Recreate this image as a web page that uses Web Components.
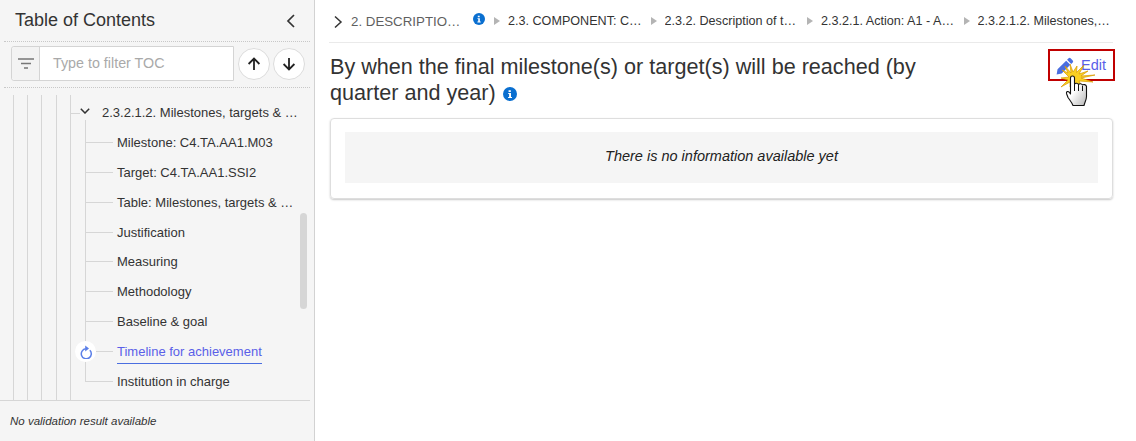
<!DOCTYPE html>
<html lang="en"><head><meta charset="utf-8"><title>TOC</title>
<style>
html,body{margin:0;height:441px;overflow:hidden;background:#fff;font-family:"Liberation Sans",Arial,sans-serif;color:#333}
toc-app{display:flex;width:1136px;height:441px}
</style></head><body>
<toc-app>
  <toc-sidebar>
    <toc-row kind="parent">2.3.2.1.2. Milestones, targets &amp; …</toc-row>
    <toc-row>Milestone: C4.TA.AA1.M03</toc-row>
    <toc-row>Target: C4.TA.AA1.SSI2</toc-row>
    <toc-row>Table: Milestones, targets &amp; …</toc-row>
    <toc-row>Justification</toc-row>
    <toc-row>Measuring</toc-row>
    <toc-row>Methodology</toc-row>
    <toc-row>Baseline &amp; goal</toc-row>
    <toc-row kind="active">Timeline for achievement</toc-row>
    <toc-row kind="last">Institution in charge</toc-row>
  </toc-sidebar>
  <toc-main></toc-main>
</toc-app>
<script>
function def(name, html){
  const t=document.createElement('template');t.innerHTML=html;
  customElements.define(name,class extends HTMLElement{
    constructor(){super();this.attachShadow({mode:'open'}).appendChild(t.content.cloneNode(true));}
  });
}
const INFO=s=>`<svg width="${s}" height="${s}" viewBox="0 0 14 14" aria-hidden="true"><circle cx="7" cy="7" r="7" fill="#0a6fd0"/><path d="M5.6 3.2h2.2v1.7H5.6zM5.2 6h2.8v4h1v1.1H5.1V10h1V7.1h-.9z" fill="#fff"/></svg>`;

def('toc-app',`<style>:host{display:flex}</style><slot></slot>`);

def('toc-iconbtn',`<style>
:host{display:flex;width:32px;height:32px;box-sizing:border-box;border:1px solid #dcdcdc;border-radius:50%;background:#fff;align-items:center;justify-content:center}
</style><slot></slot>`);

def('toc-filter',`<style>
:host{display:flex;align-items:center;gap:4px;margin:4px 4px 0 11px;height:35px}
.box{display:flex;width:223px;height:35px;box-sizing:border-box;border:1px solid #d4d4d4;border-radius:3px 0 0 3px;background:#fff}
.add{width:27px;flex:none;background:#f3f3f3;border-right:1px solid #d4d4d4;display:flex;align-items:center;justify-content:center;border-radius:3px 0 0 3px}
.ph{padding-left:13px;font-size:14.3px;line-height:33px;color:#a9a9a9}
.btns{display:flex;gap:3px}
</style>
<div class="box"><div class="add"><svg width="16" height="11" viewBox="0 0 16 11"><path d="M0 1h16M3 5.5h10M6 10h4" stroke="#777" stroke-width="1.6"/></svg></div><div class="ph">Type to filter TOC</div></div>
<div class="btns">
<toc-iconbtn><svg width="14" height="14" viewBox="0 0 14 14"><path d="M7 13V1.800M1.600 7 7 1.600 12.400 7" fill="none" stroke="#222" stroke-width="1.800"/></svg></toc-iconbtn>
<toc-iconbtn><svg width="14" height="14" viewBox="0 0 14 14"><path d="M7 1v11.200M1.600 7 7 12.400 12.400 7" fill="none" stroke="#222" stroke-width="1.800"/></svg></toc-iconbtn>
</div>`);

def('toc-row',`<style>
:host{display:flex;height:29.875px;align-items:center;position:relative;font-size:13px;white-space:nowrap;color:#333}
.stem{position:absolute;left:0;top:0;bottom:0;width:1px;background:#d6d6d6}
.hook{flex:none;width:28px;height:1px;background:#d6d6d6;margin:-1px 4px 0 0}
.lab{display:block;line-height:20px}
:host([kind=last]) .stem{bottom:50%}
:host([kind=active]) .hook{margin-left:11px;width:17px}
:host([kind=active]) .lab{color:#5a5fe8;border-bottom:1px solid #4a6ee0;margin-top:2px;padding-bottom:1px}
.spin{display:none;position:absolute;left:-10px;top:50%;margin-top:-11px;width:21px;height:21px;border-radius:50%;background:#fff;align-items:center;justify-content:center}
:host([kind=active]) .spin{display:flex}
:host([kind=parent]){margin-left:-15px;height:30px}
:host([kind=parent]) .stem{left:15px;top:22px;bottom:0}
:host([kind=parent]) .hook{display:none}
.chev{display:none;flex:none;margin-top:-4px}
:host([kind=parent]) .chev{display:block}
:host([kind=parent]) .lab{margin-left:12px}
.lead{display:none;flex:none;width:10px;height:1px;background:#d6d6d6}
:host([kind=parent]) .lead{display:block}
</style>
<span class="stem"></span><span class="lead"></span>
<svg class="chev" width="10" height="6" viewBox="0 0 10 6"><path d="M.8.8 5 5 9.200.8" fill="none" stroke="#333" stroke-width="1.500"/></svg>
<span class="spin"><svg width="14" height="15" viewBox="0 0 14 15"><path d="M10.800 5.200A5 5 0 1 1 6.800 3.800" transform="translate(0 1)" fill="none" stroke="#5b7fe8" stroke-width="1.500"/><path d="M6.200 1.500 10 4.600 6.200 7.400z" fill="#5b7fe8"/></svg></span>
<span class="hook"></span><span class="lab"><slot></slot></span>`);

def('toc-sidebar',`<style>
:host{display:flex;flex-direction:column;flex:none;width:315px;height:441px;box-sizing:border-box;background:#f5f5f5;border-right:1px solid #d2d2d2;padding-right:4px}
.head{display:flex;justify-content:space-between;align-items:center;height:41px;padding:0 15px 0 15px;box-sizing:border-box;font-size:18px;color:#333}
.dots{height:0;border-top:1px dotted #c8c8c8;margin-left:4px}
.tree{flex:1;min-height:0;position:relative;overflow:hidden;display:flex;padding-top:9px;box-sizing:border-box}
.guides{display:flex;flex:none;margin:-2px 0 0 13px}
.guides i{display:block;width:1px;background:#d6d6d6;margin-right:13px}
.guides i:nth-child(3){margin-right:14px}
.rows{margin:1px 0 0 1px}
.bar{position:absolute;left:300px;top:125px;width:7px;height:96px;border-radius:3.5px;background:#d6d6d6}
.foot{height:40px;border-top:1px solid #d6d6d6;padding-left:10px;font:italic 11.5px/40px "Liberation Sans",Arial,sans-serif;color:#333}
</style>
<div class="head"><span>Table of Contents</span><svg width="9" height="14" viewBox="0 0 9 14"><path d="M8 1 2 7l6 6" fill="none" stroke="#333" stroke-width="1.700"/></svg></div>
<div class="dots"></div>
<toc-filter></toc-filter>
<div class="dots" style="margin-top:6px"></div>
<div class="tree"><div class="guides"><i></i><i></i><i></i><i></i><i></i></div><div class="rows"><slot></slot></div><div class="bar"></div></div>
<div class="foot">No validation result available</div>`);

def('toc-crumb',`<style>
:host{display:flex;align-items:center;font-size:12.6px;color:#333;white-space:nowrap}
:host([first]){color:#5f5f5f;font-size:13.3px}
.tri{width:0;height:0;border-left:6px solid #b4b4b4;border-top:4.5px solid transparent;border-bottom:4.5px solid transparent;margin:0 8px 0 10px}
:host([first]) .tri{display:none}
.t{display:block;width:var(--w,132.500px);overflow:hidden}
</style><span class="tri"></span><span class="t"><slot></slot></span>`);

def('toc-edit',`<style>
:host{display:block;position:relative;width:67px;height:32px;box-sizing:border-box;border:2px solid #c00000;flex:none}
.in{display:flex;align-items:center;height:100%;padding-left:6px;gap:7px;font-size:14.5px;color:#5a5fe8}
.in svg{margin-top:1px}
.fx{position:absolute;left:0;top:0;overflow:visible;pointer-events:none}
</style>
<div class="in"><svg width="18" height="18" viewBox="0 0 20 20"><path d="M14 1.400a1.600 1.600 0 0 1 2.200 0l2.400 2.400a1.600 1.600 0 0 1 0 2.200l-1.700 1.700-4.600-4.600zM11.300 4.100l4.600 4.600-9.600 9.600-5.600 1.100 1-5.700z" fill="#4a6ee0"/></svg><span>Edit</span></div>
<svg class="fx" width="50" height="60" viewBox="0 0 50 60">
<defs><linearGradient id="g" x1="0" y1="0" x2="1" y2="1"><stop offset=".45" stop-color="#fff"/><stop offset="1" stop-color="#b5b5b5"/></linearGradient></defs>
<path d="M20 13 23 21 27 15 26.500 21.500 34 14 29 23 38 20 31 25 45 24 31 27 43 31 29 30 33 37 24 31 20 36 20 31 11 36 18 29 11 27 19 26 12 19 18 22 15 15 21 22z" fill="#f9cf22" stroke="#d99a00" stroke-width=".7"/>
<path d="M20.500 27a2 2 0 0 1 4 0v6c1-1 3-1 4 .5 1-1 3-1 4 .5 1-1 3.500-.5 4 1.500v10c0 3-1.500 5-2.500 9H23c-1-3-3-5-5-8l-1.500-4c-.5-2 1.500-2.500 2.500-1.500l1.500 2z" fill="url(#g)" stroke="#111" stroke-width="1.100" stroke-linejoin="round"/>
<path d="M24.500 33v7M28.500 34v6M32.500 35v5" stroke="#111" stroke-width="1" fill="none"/>
</svg>`);

def('toc-main',`<style>
:host{display:block;flex:1;min-width:0;background:#fff;padding:0 23px 0 15px;box-sizing:border-box;position:relative}
.crumbs{display:flex;align-items:center;height:42px;border-bottom:1px solid #eaeaea;margin-left:-1px}
.gt{margin:2px 8px 0 4px;flex:none}
.i1{display:flex;margin:-5px -1px 0 0}
.hd{display:flex;justify-content:space-between;padding-top:6px}
h1{margin:5px 0 0;width:600px;font-size:21.6px;font-weight:400;line-height:26px;color:#333}
h1 svg{vertical-align:-1px;margin-left:1px}
.ed{margin-right:-2px}
.card{margin:12px 0 0;height:81px;box-sizing:border-box;border:1px solid #dedede;border-radius:4px;box-shadow:0 1px 2px rgba(0,0,0,.22);padding:13px 14px 0}
.msg{height:51px;background:#f5f5f5;font:italic 14.5px/48px "Liberation Sans",Arial,sans-serif;text-align:center;color:#222}
</style>
<div class="crumbs">
<svg class="gt" width="10" height="14" viewBox="0 0 10 14"><path d="M2 1.500 8 7l-6 5.500" fill="none" stroke="#333" stroke-width="1.500"/></svg>
<toc-crumb first style="--w:122px">2. DESCRIPTIO…</toc-crumb><span class="i1">${INFO(12)}</span>
<toc-crumb>2.3. COMPONENT: C…</toc-crumb>
<toc-crumb>2.3.2. Description of t…</toc-crumb>
<toc-crumb>2.3.2.1. Action: A1 - A…</toc-crumb>
<toc-crumb>2.3.2.1.2. Milestones,…</toc-crumb>
</div>
<div class="hd"><h1>By when the final milestone(s) or target(s) will be reached (by quarter and year) ${INFO(14)}</h1><toc-edit class="ed"></toc-edit></div>
<div class="card"><div class="msg">There is no information available yet</div></div>`);
</script>
</body></html>
